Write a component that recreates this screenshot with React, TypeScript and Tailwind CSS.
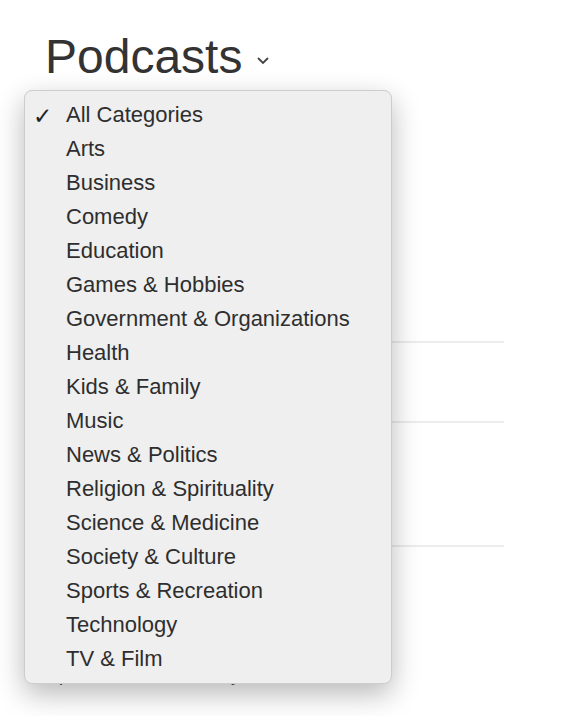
import React from "react";

const categories = [
  "All Categories",
  "Arts",
  "Business",
  "Comedy",
  "Education",
  "Games & Hobbies",
  "Government & Organizations",
  "Health",
  "Kids & Family",
  "Music",
  "News & Politics",
  "Religion & Spirituality",
  "Science & Medicine",
  "Society & Culture",
  "Sports & Recreation",
  "Technology",
  "TV & Film",
];

export default function App() {
  return (
    <div
      className="relative w-[562px] h-[716px] bg-white overflow-hidden text-[#333]"
      style={{ fontFamily: '"Liberation Sans", Arial, sans-serif' }}
    >
      {/* page behind */}
      <div className="pl-[45px] pt-[33px] w-[504px]">
        <div className="flex items-center gap-[14px]">
          <h1 className="text-[48px] leading-[48px] font-normal text-[#333]">Podcasts</h1>
          <svg width="14" height="10" viewBox="0 0 14 10" className="mt-[6px]">
            <polyline points="2,3 7,8 12,3" fill="none" stroke="#444" strokeWidth="1.8" />
          </svg>
        </div>
        <div className="h-[260px]" />
        <div className="h-[80px] border-t-2 border-[#ececec]" />
        <div className="h-[124px] border-t-2 border-[#ececec]" />
        <div className="border-t-2 border-[#ececec] h-[118px]" />
        <p className="text-[18px] leading-[24px] text-[#444] -ml-[5px]">Top Shows Ranked Daily</p>
      </div>

      {/* dropdown menu */}
      <div className="absolute left-[24px] top-[90px] w-[368px] h-[594px] rounded-[8px] bg-[#efefef] border border-[#cdcdcd] shadow-[0_10px_28px_rgba(0,0,0,0.28)] pt-[6px]">
        <ul>
          {categories.map((c, i) => (
            <li key={c} className="relative h-[34px] flex items-center pl-[41px] text-[22px] text-[#2e2e2e]">
              {i === 0 && (
                <span
                  className="absolute left-[8px] top-[2px] text-[23px] font-bold text-[#222]"
                  style={{ fontFamily: '"DejaVu Sans", sans-serif' }}
                >
                  ✓
                </span>
              )}
              {c}
            </li>
          ))}
        </ul>
      </div>
    </div>
  );
}
